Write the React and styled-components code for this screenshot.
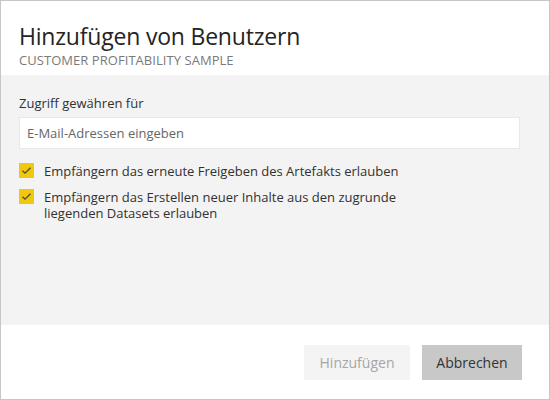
import styled, { createGlobalStyle } from "styled-components";

const GlobalStyle = createGlobalStyle`
  html, body {
    margin: 0;
    padding: 0;
    background: #ffffff;
  }
  body {
    font-family: "Open Sans", "Noto Sans", sans-serif;
  }
`;

const Dialog = styled.div`
  width: 550px;
  height: 400px;
  box-sizing: border-box;
  border: 1px solid #c6c6c6;
  display: flex;
  flex-direction: column;
  background: #ffffff;
`;

const Header = styled.div`
  height: 74px;
  box-sizing: border-box;
  padding: 21px 18px 0;
`;

const Title = styled.h1`
  margin: 0;
  font-size: 23px;
  font-weight: 400;
  line-height: 28px;
  color: #252423;
  letter-spacing: -0.2px;
`;

const Subtitle = styled.div`
  margin-top: 2px;
  font-size: 13px;
  line-height: 16px;
  color: #7a7a7a;
  text-transform: uppercase;
  letter-spacing: 0.05px;
`;

const Body = styled.div`
  flex: 1;
  background: #f3f3f3;
  padding: 19px 29px 0 18px;
`;

const Label = styled.div`
  font-size: 13px;
  line-height: 18px;
  color: #323130;
  margin-bottom: 5px;
`;

const Input = styled.input`
  display: block;
  width: 100%;
  height: 32px;
  box-sizing: border-box;
  border: 1px solid #e8e8e8;
  background: #ffffff;
  padding: 0 7px;
  font-family: inherit;
  font-size: 13px;
  color: #323130;
  outline: none;

  &::placeholder {
    color: #666666;
  }
`;

const Options = styled.div`
  display: flex;
  flex-direction: column;
  gap: 10px;
  margin-top: 14px;
`;

const Option = styled.label`
  display: flex;
  align-items: flex-start;
  gap: 10px;
  font-size: 13px;
  line-height: 16px;
  color: #323130;
  max-width: 400px;
`;

const Box = styled.span`
  flex: none;
  width: 15px;
  height: 15px;
  background: #f2c80f;
  display: flex;
  align-items: center;
  justify-content: center;
`;

const Footer = styled.div`
  height: 74px;
  box-sizing: border-box;
  display: flex;
  justify-content: flex-end;
  align-items: flex-start;
  gap: 12px;
  padding: 20px 27px 0 0;
`;

const Button = styled.button`
  height: 35px;
  min-width: ${(props) => props.width}px;
  border: none;
  font-family: inherit;
  font-size: 14px;
  background: ${(props) => (props.primary ? "#c8c8c8" : "#f4f4f4")};
  color: ${(props) => (props.primary ? "#333333" : "#a6a6a6")};
  cursor: ${(props) => (props.primary ? "pointer" : "default")};
  padding: 0 12px;
`;

const Check = () => (
  <svg width="11" height="9" viewBox="0 0 11 9">
    <path d="M1.5 4.8 L4 7.2 L9.5 1.8" fill="none" stroke="#4a4a3a" strokeWidth="1.3" />
  </svg>
);

const App = () => (
  <>
    <GlobalStyle />
    <Dialog>
      <Header>
        <Title>Hinzufügen von Benutzern</Title>
        <Subtitle>Customer Profitability Sample</Subtitle>
      </Header>
      <Body>
        <Label>Zugriff gewähren für</Label>
        <Input placeholder="E-Mail-Adressen eingeben" />
        <Options>
          <Option>
            <Box>
              <Check />
            </Box>
            Empfängern das erneute Freigeben des Artefakts erlauben
          </Option>
          <Option>
            <Box>
              <Check />
            </Box>
            Empfängern das Erstellen neuer Inhalte aus den zugrunde liegenden Datasets erlauben
          </Option>
        </Options>
      </Body>
      <Footer>
        <Button width={106} disabled>
          Hinzufügen
        </Button>
        <Button width={100} primary>
          Abbrechen
        </Button>
      </Footer>
    </Dialog>
  </>
);

export default App;
